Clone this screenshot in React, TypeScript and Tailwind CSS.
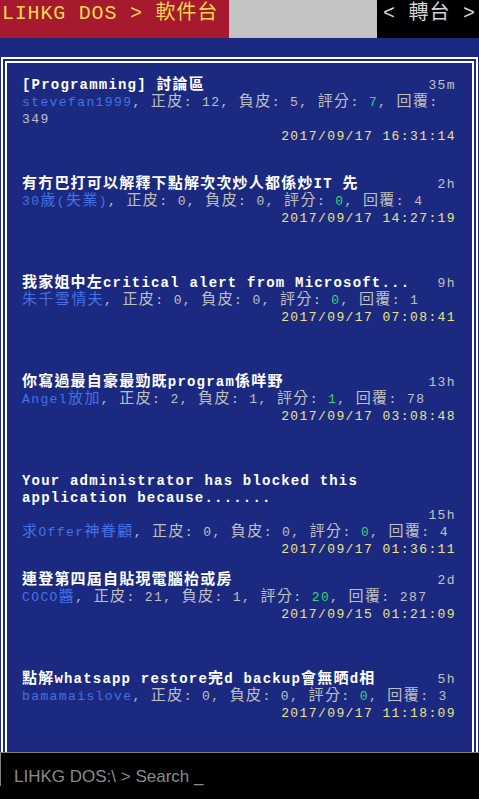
import React from 'react';

type Post = {
  title: string;
  age: string;
  user: string;
  up: number;
  down: number;
  score: number;
  replies: number;
  date: string;
};

const posts: Post[] = [
  { title: '[Programming] 討論區', age: '35m', user: 'stevefan1999', up: 12, down: 5, score: 7, replies: 349, date: '2017/09/17 16:31:14' },
  { title: '有冇巴打可以解釋下點解次次炒人都係炒IT 先', age: '2h', user: '30歲(失業)', up: 0, down: 0, score: 0, replies: 4, date: '2017/09/17 14:27:19' },
  { title: '我家姐中左critical alert from Microsoft...', age: '9h', user: '朱千雪情夫', up: 0, down: 0, score: 0, replies: 1, date: '2017/09/17 07:08:41' },
  { title: '你寫過最自豪最勁既program係咩野', age: '13h', user: 'Angel放加', up: 2, down: 1, score: 1, replies: 78, date: '2017/09/17 03:08:48' },
  { title: 'Your administrator has blocked this application because.......', age: '15h', user: '求Offer神眷顧', up: 0, down: 0, score: 0, replies: 4, date: '2017/09/17 01:36:11' },
  { title: '連登第四屆自貼現電腦枱或房', age: '2d', user: 'COCO醬', up: 21, down: 1, score: 20, replies: 287, date: '2017/09/15 01:21:09' },
  { title: '點解whatsapp restore完d backup會無晒d相', age: '5h', user: 'bamamaislove', up: 0, down: 0, score: 0, replies: 3, date: '2017/09/17 11:18:09' },
];

const CJK = /([\u2E80-\u9FFF\uF900-\uFAFF\uFF00-\uFFEF]+)/;

const Mixed = ({ text, cjk = 'text-[15px]' }: { text: string; cjk?: string }) => (
  <>
    {text.split(CJK).map((part, i) =>
      CJK.test(part) ? (
        <span key={i} className={cjk}>
          {part}
        </span>
      ) : (
        <React.Fragment key={i}>{part}</React.Fragment>
      )
    )}
  </>
);

const PostRow = ({ post }: { post: Post }) => (
  <div className="h-[99px]">
    <div className="flex flex-wrap">
      <span className="font-bold text-white text-[14px] tracking-[1.2px]">
        <Mixed text={post.title} cjk="text-[15px]" />
      </span>
      <span className="ml-auto text-[#c3c3c3]">{post.age}</span>
    </div>
    <p className="text-[#c0c0c0]">
      <span className="text-[#4570e6]">
        <Mixed text={post.user} />
      </span>
      <Mixed text={`, 正皮: ${post.up}, 負皮: ${post.down}, 評分: `} />
      <span className="text-[#31d873]">{post.score}</span>
      <Mixed text={`, 回覆: ${post.replies}`} />
    </p>
    <p className="text-right text-[#ebe38a]">{post.date}</p>
  </div>
);

export default function App() {
  return (
    <div className="w-[479px] h-[799px] flex flex-col bg-black overflow-hidden">
      <header className="h-[38px] flex font-['Liberation_Mono','Noto_Sans_CJK_TC',monospace] text-[20px] leading-[28px] tracking-[0.8px]">
        <div className="w-[229px] bg-[#a6192e] pl-[2px] text-[#f3d94a] whitespace-nowrap">LIHKG DOS &gt; 軟件台</div>
        <div className="flex-1 bg-[#c3c3c3]" />
        <div className="w-[102px] bg-black pl-[6px] text-[#d4d4d4] whitespace-nowrap">&lt; 轉台 &gt;</div>
      </header>

      <main className="h-[714px] bg-[#1b2a80] pt-[19px] px-[1px] overflow-hidden">
        <div className="border-t-[6px] border-x-[6px] border-double border-white pl-[15px] pr-[16px] pt-[14px] font-['Liberation_Mono','Noto_Sans_CJK_TC',monospace] text-[13px] leading-[17px] tracking-[1.4px]">
          {posts.map((p) => (
            <PostRow key={p.date} post={p} />
          ))}
        </div>
      </main>

      <footer className="h-[47px] bg-black border-t border-[#808080]">
        <div className="h-[33px] border-l border-[#808080] pl-[13px] pt-[14px] font-['Liberation_Sans',Arial,sans-serif] text-[17px] leading-[20px] text-[#8a8a8a] whitespace-nowrap">
          LIHKG DOS:\ &gt; Search _
        </div>
      </footer>
    </div>
  );
}
